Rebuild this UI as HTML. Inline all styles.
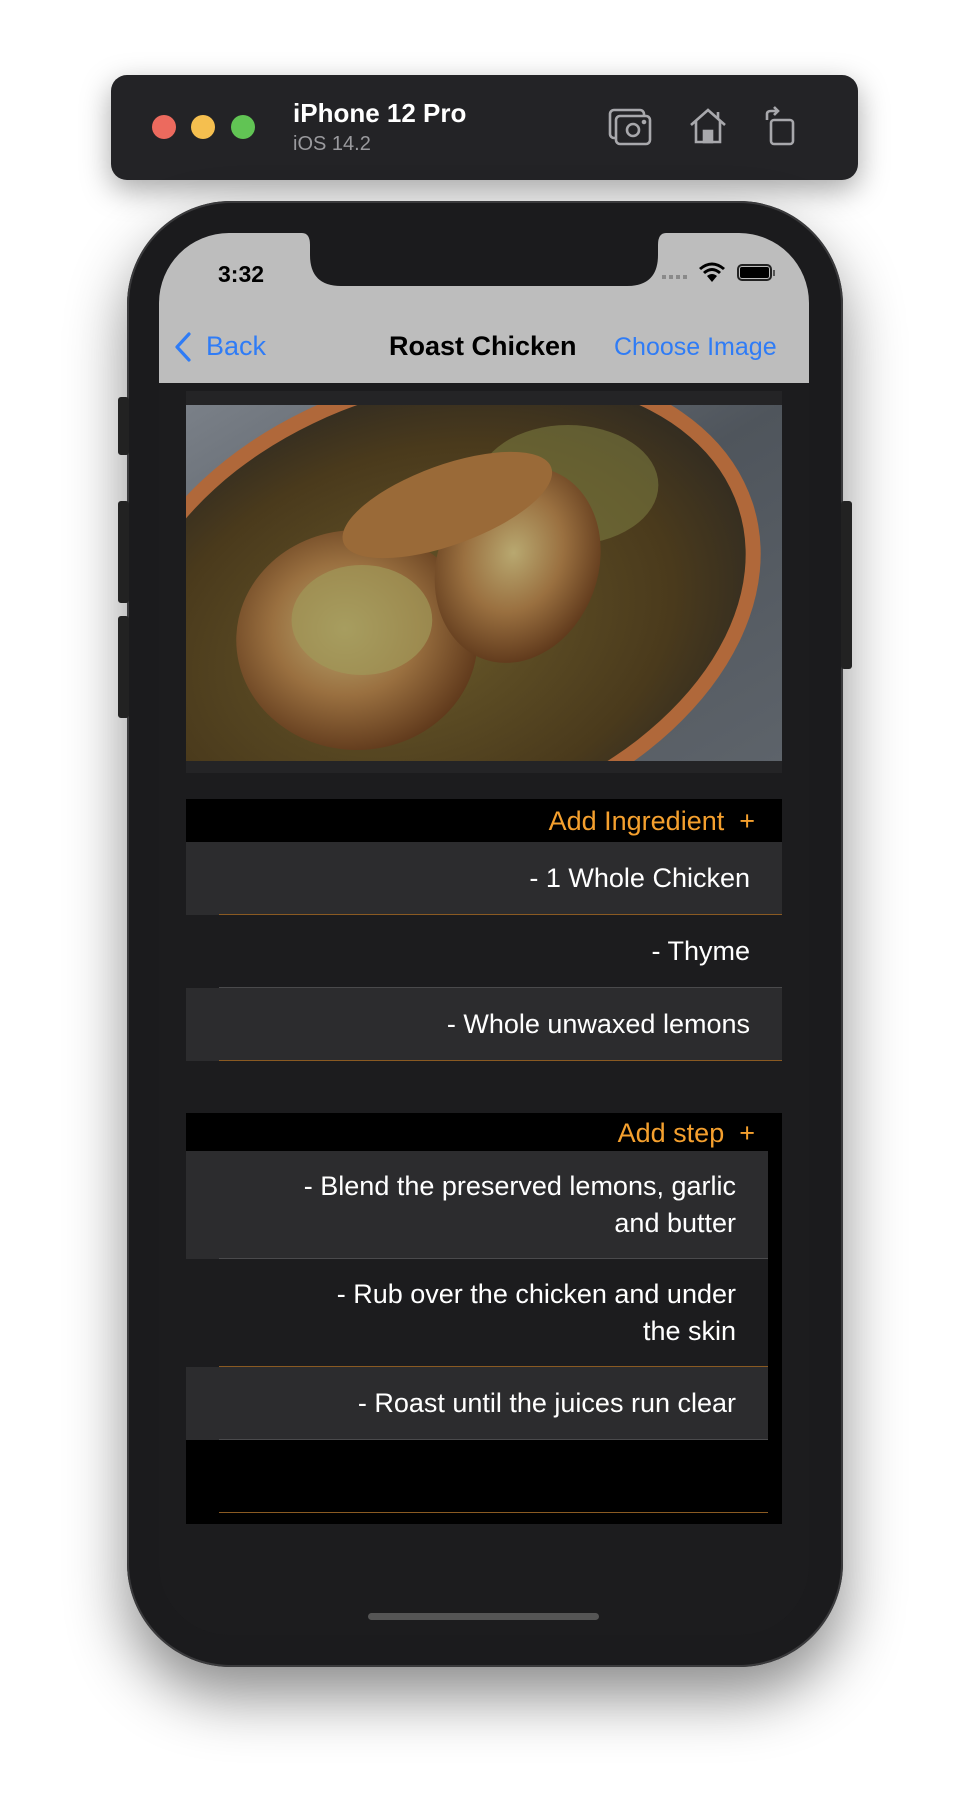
<!DOCTYPE html>
<html><head><meta charset="utf-8"><style>
*{margin:0;padding:0;box-sizing:border-box}
body{width:968px;height:1816px;background:#fff;position:relative;overflow:hidden;font-family:"Liberation Sans",sans-serif}
.abs{position:absolute}
.toolbar{left:111px;top:75px;width:747px;height:105px;background:#232326;border-radius:16px;box-shadow:0 10px 30px rgba(0,0,0,.35)}
.dot{width:24px;height:24px;border-radius:50%;top:115px}
.body{left:127px;top:201px;width:716px;height:1466px;background:#1b1b1d;border-radius:104px;box-shadow:0 30px 60px rgba(0,0,0,.45),0 0 0 2px #3a3a3c inset}
.btn{background:#222;border-radius:3px}
.screen{left:159px;top:233px;width:650px;height:1402px;background:#1c1c1e;border-radius:70px;overflow:hidden}
.nav{left:0;top:0;width:650px;height:150px;background:#bdbdbd}
.row{position:absolute;text-align:right;color:#fff;font-size:27px}
.sep{position:absolute;height:1px}
</style></head><body>
<div class="abs toolbar"></div>
<div class="abs dot" style="left:152px;background:#ec6a5e"></div>
<div class="abs dot" style="left:191px;background:#f5bf4f"></div>
<div class="abs dot" style="left:231px;background:#61c454"></div>
<div class="abs" style="left:293px;top:98px;color:#fff;font-size:26px;font-weight:bold">iPhone 12 Pro</div>
<div class="abs" style="left:293px;top:133px;color:#9a9a9e;font-size:20px">iOS 14.2</div>
<svg class="abs" style="left:608px;top:107px" width="44" height="40" viewBox="0 0 44 40" fill="none" stroke="#a8a8ac" stroke-width="2.6"><rect x="2" y="3" width="34" height="28" rx="4"/><rect x="8" y="9" width="34" height="28" rx="4" fill="#232326"/><circle cx="25" cy="23" r="6"/><circle cx="36" cy="15" r="1" fill="#a8a8ac"/></svg>
<svg class="abs" style="left:688px;top:106px" width="40" height="40" viewBox="0 0 40 40" fill="none" stroke="#a8a8ac" stroke-width="2.6"><path d="M3 19 L20 4 L37 19"/><path d="M8 15 V36 H32 V15"/><rect x="16" y="25" width="8" height="11" fill="#a8a8ac"/><path d="M30 6 V12"/></svg>
<svg class="abs" style="left:763px;top:106px" width="34" height="40" viewBox="0 0 34 40" fill="none" stroke="#a8a8ac" stroke-width="2.6"><rect x="8" y="14" width="22" height="24" rx="3"/><path d="M4 14 V8 Q4 5 8 5 H14"/><path d="M11 1 L15 5 L11 9"/></svg>

<div class="abs body"></div>
<div class="abs btn" style="left:118px;top:397px;width:11px;height:58px"></div>
<div class="abs btn" style="left:118px;top:501px;width:11px;height:102px"></div>
<div class="abs btn" style="left:118px;top:616px;width:11px;height:102px"></div>
<div class="abs btn" style="left:841px;top:501px;width:11px;height:168px"></div>

<div class="abs screen">
  <div class="abs nav"></div>
  <svg class="abs" style="left:143px;top:0" width="364" height="54" viewBox="0 0 364 54"><path d="M0 0 H364 Q356 0 356 12 V22 Q356 53 325 53 H39 Q8 53 8 22 V12 Q8 0 0 0Z" fill="#1b1b1d"/></svg>
  <div class="abs" style="left:59px;top:28px;font-size:23px;font-weight:bold;color:#000">3:32</div>
  <div class="abs" style="left:503px;top:42px;width:28px;height:4px;background:repeating-linear-gradient(90deg,#8a8a8a 0 4px,transparent 4px 7px)"></div>
  <svg class="abs" style="left:539px;top:28px" width="28" height="22" viewBox="0 0 28 22"><path d="M14 21 L9 15 Q14 11 19 15Z M5 11 Q14 3 23 11 L21 13 Q14 7 7 13Z M1 7 Q14 -4 27 7 L25 9 Q14 0 3 9Z" fill="#000"/></svg>
  <div class="abs" style="left:578px;top:31px;width:35px;height:17px;border:2px solid #222;border-radius:5px;padding:1px"><div style="width:100%;height:100%;background:#000;border-radius:2px"></div></div>
  <div class="abs" style="left:614px;top:37px;width:2px;height:6px;background:#555"></div>
  <svg class="abs" style="left:14px;top:98px" width="20" height="32" viewBox="0 0 20 32"><path d="M16 3 L4 16 L16 29" stroke="#2f7cf6" stroke-width="3.2" fill="none" stroke-linecap="round" stroke-linejoin="round"/></svg>
  <div class="abs" style="left:47px;top:98px;font-size:27px;color:#2f7cf6">Back</div>
  <div class="abs" style="left:230px;top:98px;font-size:27px;font-weight:bold;color:#000">Roast Chicken</div>
  <div class="abs" style="left:455px;top:100px;font-size:25px;color:#2f7cf6">Choose Image</div>

  <div class="abs" style="left:27px;top:158px;width:596px;height:382px;background:#242426"></div>
  <svg class="abs" style="left:27px;top:172px" width="596" height="356" viewBox="0 0 593 356" preserveAspectRatio="none">
    <defs>
      <linearGradient id="bg" x1="0" y1="0" x2="1" y2="1"><stop offset="0" stop-color="#7a8088"/><stop offset=".5" stop-color="#4f555c"/><stop offset="1" stop-color="#5d636a"/></linearGradient>
      <radialGradient id="pan" cx=".45" cy=".55" r=".6"><stop offset="0" stop-color="#6a5a2a"/><stop offset=".7" stop-color="#4a3a1c"/><stop offset="1" stop-color="#2f2a22"/></radialGradient>
      <radialGradient id="ck" cx=".45" cy=".45" r=".6"><stop offset="0" stop-color="#b8a870"/><stop offset=".5" stop-color="#9a7040"/><stop offset="1" stop-color="#5a3418"/></radialGradient>
    </defs>
    <rect width="593" height="356" fill="url(#bg)"/>
    <ellipse cx="250" cy="200" rx="330" ry="230" transform="rotate(-18 250 200)" fill="#b0683a"/>
    <ellipse cx="250" cy="200" rx="315" ry="215" transform="rotate(-18 250 200)" fill="url(#pan)"/>
    <ellipse cx="380" cy="80" rx="90" ry="60" fill="#7a7a40" opacity=".6"/>
    <ellipse cx="170" cy="235" rx="120" ry="110" fill="url(#ck)"/>
    <ellipse cx="330" cy="160" rx="80" ry="100" transform="rotate(20 330 160)" fill="url(#ck)"/>
    <ellipse cx="260" cy="100" rx="110" ry="40" transform="rotate(-20 260 100)" fill="#9a6a38"/>
    <ellipse cx="175" cy="215" rx="70" ry="55" fill="#a09858" opacity=".7"/>
  </svg>

  <div class="abs" style="left:27px;top:566px;width:596px;height:44px;background:#000"></div>
  <div class="abs" style="left:27px;top:566px;width:569px;line-height:44px;text-align:right;font-size:27px;color:#f5a02e">Add Ingredient&nbsp;&nbsp;+</div>
  <div class="abs" style="left:27px;top:609px;width:596px;height:73px;background:#2c2c2e"></div>
  <div class="abs" style="left:27px;top:755px;width:596px;height:73px;background:#2c2c2e"></div>
  <div class="row" style="left:27px;top:609px;width:564px;line-height:73px">- 1 Whole Chicken</div>
  <div class="row" style="left:27px;top:682px;width:564px;line-height:73px">- Thyme</div>
  <div class="row" style="left:27px;top:755px;width:564px;line-height:73px">- Whole unwaxed lemons</div>
  <div class="sep" style="left:60px;top:681px;width:563px;background:#8a5a22"></div>
  <div class="sep" style="left:60px;top:754px;width:563px;background:#4a4a4c"></div>
  <div class="sep" style="left:60px;top:827px;width:563px;background:#8a5a22"></div>

  <div class="abs" style="left:27px;top:880px;width:596px;height:411px;background:#000"></div>
  <div class="abs" style="left:27px;top:881px;width:569px;line-height:38px;text-align:right;font-size:27px;color:#f5a02e">Add step&nbsp;&nbsp;+</div>
  <div class="abs" style="left:27px;top:918px;width:582px;height:108px;background:#2c2c2e"></div>
  <div class="abs" style="left:27px;top:1026px;width:582px;height:108px;background:#1c1c1e"></div>
  <div class="abs" style="left:27px;top:1134px;width:582px;height:73px;background:#2c2c2e"></div>
  <div class="row" style="left:27px;top:935px;width:550px;line-height:37px">- Blend the preserved lemons, garlic<br>and butter</div>
  <div class="row" style="left:27px;top:1043px;width:550px;line-height:37px">- Rub over the chicken and under<br>the skin</div>
  <div class="row" style="left:27px;top:1134px;width:550px;line-height:73px">- Roast until the juices run clear</div>
  <div class="sep" style="left:60px;top:1025px;width:549px;background:#4a4a4c"></div>
  <div class="sep" style="left:60px;top:1133px;width:549px;background:#8a5a22"></div>
  <div class="sep" style="left:60px;top:1206px;width:549px;background:#4a4a4c"></div>
  <div class="sep" style="left:60px;top:1279px;width:549px;background:#8a5a22"></div>

  <div class="abs" style="left:209px;top:1380px;width:231px;height:7px;border-radius:4px;background:#555"></div>
</div>
</body></html>
